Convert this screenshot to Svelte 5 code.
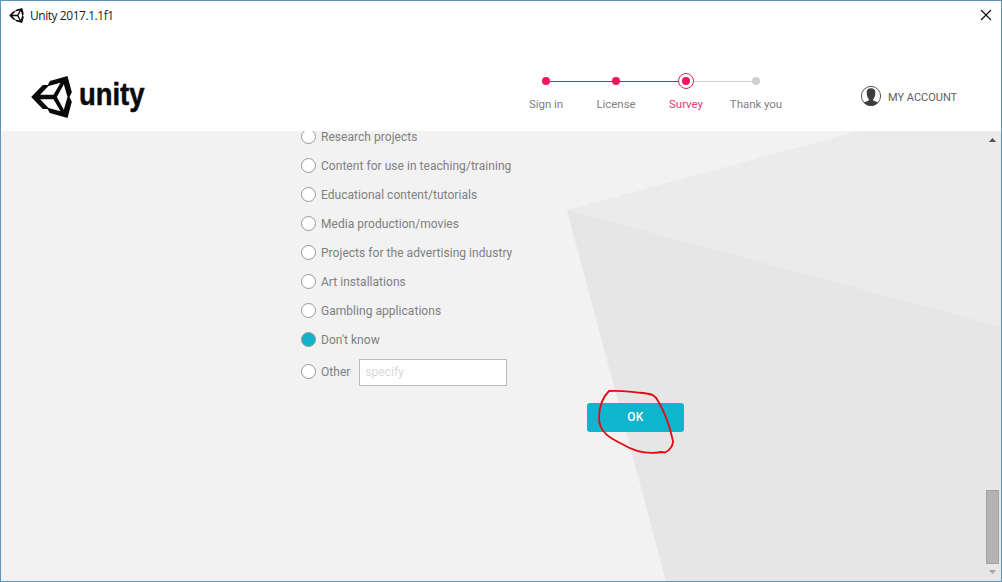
<script>
  const steps = [
    { label: 'Sign in', state: 'done' },
    { label: 'License', state: 'done' },
    { label: 'Survey', state: 'current' },
    { label: 'Thank you', state: 'todo' }
  ];
  const options = [
    'Research projects',
    'Content for use in teaching/training',
    'Educational content/tutorials',
    'Media production/movies',
    'Projects for the advertising industry',
    'Art installations',
    'Gambling applications',
    "Don't know"
  ];
  let selected = $state("Don't know");
</script>

{#snippet cube()}
  <svg class="cube" viewBox="0 0 122 126" aria-hidden="true">
    <path fill="#0a0a0a" fill-rule="evenodd" d="M0 63 35 27H50L56 15 109 0 122 49 115 63 122 77 109 126 56 111 49 99H35ZM27 56H67L88 20 52 30ZM98 25 77 63 98 101 109 63ZM27 70 52 96 88 106 67 70Z" />
  </svg>
{/snippet}

<div class="window">
  <div class="titlebar">
    <span class="app-icon">{@render cube()}</span>
    <span class="title">Unity 2017.1.1f1</span>
    <svg class="close" width="12" height="12" viewBox="0 0 12 12"><path d="M1 1 11 11M11 1 1 11" stroke="#111" stroke-width="1.15" /></svg>
  </div>

  <header>
    <div class="brand">
      {@render cube()}
      <svg class="wordmark" width="80" height="48" viewBox="0 0 80 48"><text x="0" y="29.4" textLength="65.5" lengthAdjust="spacingAndGlyphs">unity</text></svg>
    </div>
    <div class="steps">
      {#each steps as step}
        <div class="step {step.state}">
          <div class="mark"><i class="line"></i><b class="dot"></b><i class="line after"></i></div>
          <span>{step.label}</span>
        </div>
      {/each}
    </div>
    <div class="account">
      <svg width="22" height="22" viewBox="0 0 22 22">
        <circle cx="11" cy="11" r="9.6" fill="#fff" stroke="#555" stroke-width="1" />
        <path fill="#3d3d3d" d="M11 3.2C8 3.2 6.4 5 6.7 7.6L7 10.4C7.4 12.4 8.2 13.4 8.8 14V15.6L3.800 17.4C5.600 19.700 8.3 20.9 11 20.9S16.400 19.700 18.200 17.4L13.2 15.6V14C14 13.4 14.7 12.4 15 10.4L15.3 7.6C15.6 5 14 3.2 11 3.2Z" />
      </svg>
      <span>MY ACCOUNT</span>
    </div>
  </header>

  <main>
    <svg class="backdrop" width="1000" height="450" viewBox="0 0 1000 450" aria-hidden="true">
      <path d="M566 79 858 0H1000V450H665Z" fill="#ebebeb" />
      <path d="M566 79 1000 196V450H665Z" fill="#e6e6e6" />
    </svg>
    <div class="form">
      {#each options as option}
        <button class="option" onclick={() => (selected = option)}>
          <i class="radio" class:on={selected === option}></i>{option}
        </button>
      {/each}
      <div class="other">
        <button class="option" onclick={() => (selected = 'Other')}>
          <i class="radio" class:on={selected === 'Other'}></i>Other
        </button>
        <input placeholder="specify" />
      </div>
      <div class="submit">
        <button class="ok">OK</button>
        <svg class="scribble" width="82" height="70" viewBox="0 0 82 70" aria-hidden="true">
          <path d="M13 6C8 11 3 20 3 33C3 48 16 54 26 59C36 65 50 70 65 67L69 67.500C73 66 78.500 60 76.500 54C74 43 70 29 62 16C59 10 56 9 47 8C34 7 25 5 13 6Z" fill="none" stroke="#e30b12" stroke-width="1.8" stroke-linejoin="round" />
        </svg>
      </div>
    </div>
    <div class="scrollbar">
      <svg width="7" height="4" viewBox="0 0 7 4"><path d="M0 4H7L3.500 0Z" fill="#505050" /></svg>
      <div class="thumb"></div>
      <svg width="7" height="4" viewBox="0 0 7 4"><path d="M0 0H7L3.500 4Z" fill="#a3a3a3" /></svg>
    </div>
  </main>
</div>

<style>
  .window {
    box-sizing: border-box;
    width: 1002px;
    height: 582px;
    border: 1px solid #5896b5;
    background: #fff;
    display: flex;
    flex-direction: column;
    font-family: Roboto, sans-serif;
    font-size: 12px;
    color: #7f7f7f;
    overflow: hidden;
  }
  .cube { display: block; width: 41px; height: 42px; }
  .titlebar {
    height: 30px;
    flex: none;
    display: flex;
    align-items: center;
    padding: 0 9px 2px 8px;
    box-sizing: border-box;
  }
  .app-icon .cube { width: 15px; height: 15px; }
  .title {
    font-family: "Open Sans", "Noto Sans", sans-serif;
    color: #222;
    margin-left: 6px;
    flex: 1;
    font-size: 12px;
    letter-spacing: -0.45px;
  }
  header {
    height: 100px;
    flex: none;
    display: flex;
    box-sizing: border-box;
  }
  .brand { display: flex; padding: 45px 0 0 30px; width: 480px; box-sizing: border-box; margin-right: 30px; }
  .wordmark { margin-left: 7px; overflow: visible; }
  .wordmark text { font-family: "Liberation Sans", sans-serif; font-size: 30.5px; font-weight: 700; fill: #0a0a0a; stroke: #0a0a0a; stroke-width: 0.5px; }
  .steps { display: flex; padding-top: 41px; }
  .step { width: 70px; text-align: center; line-height: 16px; font-size: 11.5px; letter-spacing: -0.05px; }
  .mark { height: 18px; display: flex; align-items: center; margin-bottom: 6px; }
  .line { flex: 1; height: 1px; background: #a8268a; }
  .step:first-child .line:first-child, .step:last-child .line.after { background: transparent; }
  .current .after, .todo .line { background: #d0d0d0; }
  .dot { width: 8px; height: 8px; border-radius: 50%; background: #f5145f; }
  .current .dot { padding: 3px; background-clip: content-box; border: 1px solid #d92365; }
  .todo .dot { background: #d0d0d0; }
  .current span { color: #e93c6d; }
  .account { display: flex; height: 22px; align-items: center; margin: 54px 0 0 69px; color: #606060; }
  .account span { margin: 2px 0 0 6px; font-size: 11px; letter-spacing: 0; }
  main {
    flex: 1;
    position: relative;
    display: flex;
    justify-content: space-between;
    background: #f2f2f2;
    overflow: hidden;
  }
  .backdrop { position: absolute; inset: 0; }
  .form { position: relative; width: 390px; margin-left: 300px; margin-top: -9px; }
  button { font: inherit; color: inherit; border: 0; background: none; padding: 0; }
  .option { display: flex; align-items: center; height: 29px; white-space: nowrap; letter-spacing: 0.04px; }
  .radio { box-sizing: border-box; width: 15px; height: 15px; border: 1px solid #999; border-radius: 50%; background: #fff; margin-right: 5px; }
  .radio.on { background: #10b3cb; }
  .other { display: flex; align-items: center; height: 29px; margin-top: 3px; gap: 9px; }
  input {
    box-sizing: border-box;
    width: 148px;
    height: 27px;
    border: 1px solid #bcbcbc;
    background: #fff;
    padding: 0 5px 1px;
    margin: 1px 0 0;
    font: inherit;
  }
  input::placeholder { color: #d9d9d9; }
  .submit { position: relative; width: 97px; margin: 17px 0 0 286px; }
  .ok { display: block; width: 97px; height: 29px; border-radius: 3px; background: #0fb4cd; color: #fff; font-weight: 500; letter-spacing: 0.3px; padding-bottom: 2px; }
  .scribble { position: absolute; left: 9px; top: -18px; pointer-events: none; }
  .scrollbar { position: relative; width: 13px; margin-right: 2px; display: flex; flex-direction: column; align-items: center; justify-content: flex-end; padding: 7px 0 7px; box-sizing: border-box; }
  .thumb { box-sizing: border-box; width: 13px; height: 74px; background: #b3b3b3; border: 1px solid #a4a4a4; margin: auto 0 6px; }
</style>
